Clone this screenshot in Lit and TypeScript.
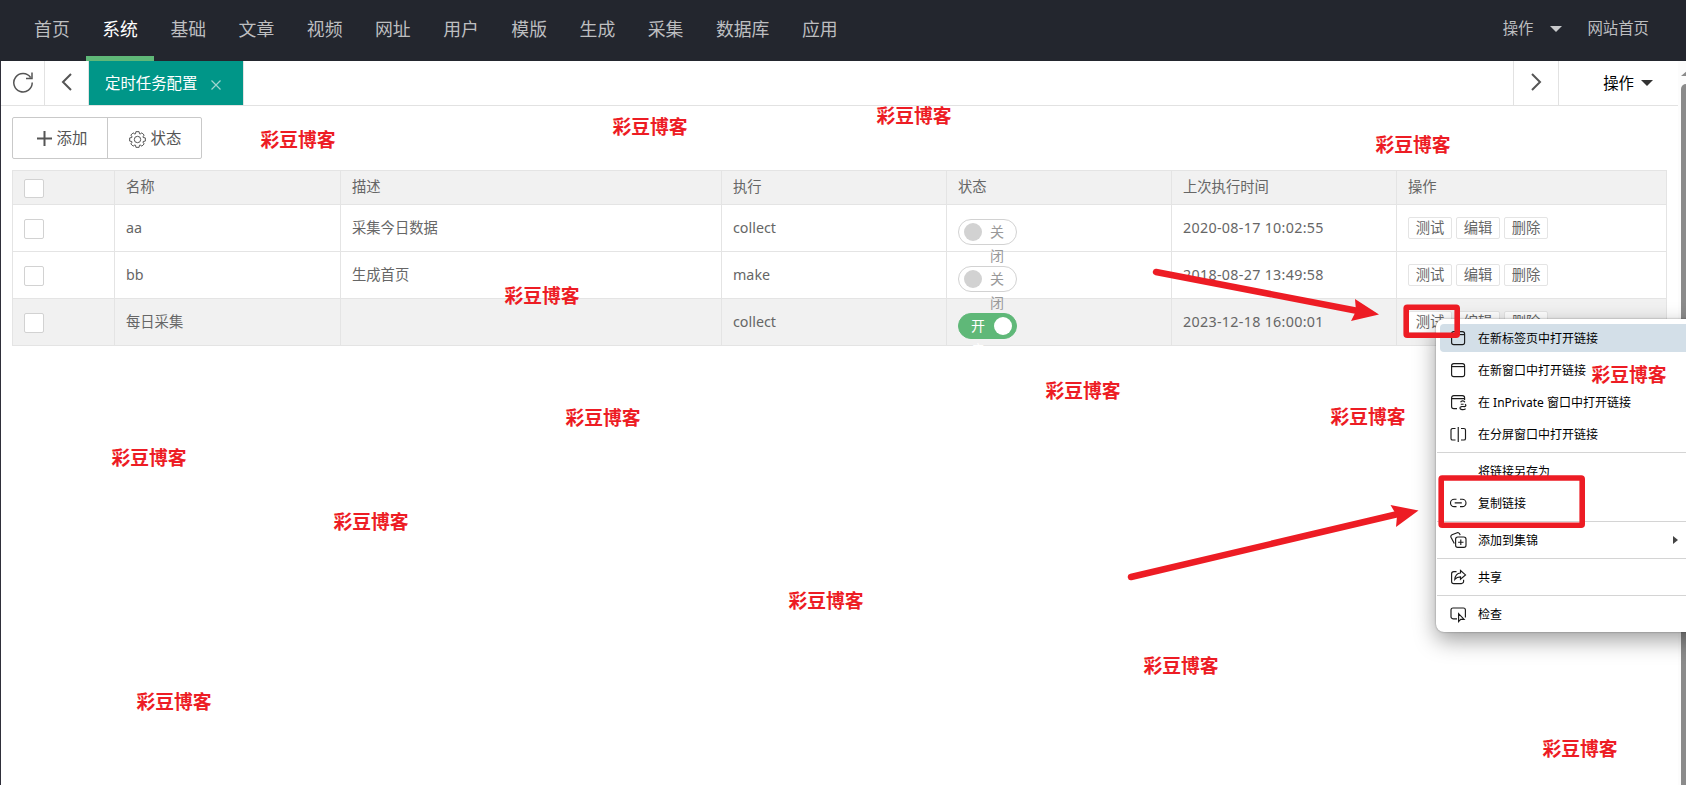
import { LitElement, html, css, svg } from "lit";
import { customElement } from "lit/decorators.js";
import { classMap } from "lit/directives/class-map.js";

const NAV = ["首页", "系统", "基础", "文章", "视频", "网址", "用户", "模版", "生成", "采集", "数据库", "应用"];

const ROWS = [
  { name: "aa", desc: "采集今日数据", run: "collect", on: false, time: "2020-08-17 10:02:55" },
  { name: "bb", desc: "生成首页", run: "make", on: false, time: "2018-08-27 13:49:58" },
  { name: "每日采集", desc: "", run: "collect", on: true, time: "2023-12-18 16:00:01" },
];

const MARKS = [
  [260.5, 140.4], [612.5, 127.4], [876.5, 116.4], [1375.5, 145.4], [504.5, 296.4], [1591.5, 375.4], [1045.500, 391.4], [565.5, 418.4],
  [1330.500, 417.4], [111.500, 458.4], [333.500, 522.4], [788.500, 601.4], [1143.500, 666.4], [136.500, 702.4], [1542.500, 749.4],
];

const ICONS = {
  tab: svg`<rect x="1.6" y="1.6" width="13" height="13" rx="2.2"/><path d="M1.6 4.6h13"/>`,
  inprivate: svg`<path d="M14.6 6V3.8a2.2 2.2 0 0 0-2.2-2.2H3.8A2.2 2.2 0 0 0 1.6 3.8v8.6a2.2 2.2 0 0 0 2.2 2.2H7M1.6 4.6h13M10.6 8.2c.7-1.8 3.6-1.7 4.2.1M10.8 10.2h2.8M14.9 10.4c1.5.4 1.3 2.3-.5 2.2-1.6-.2-4.5-.3-4.5 1.5 0 1.6 3.5 2.2 5.7.6"/>`,
  split: svg`<path d="M5.500 2.500H2.600A1.600 1.600 0 0 0 1 4.100v8.300A1.600 1.600 0 0 0 2.600 14h2.900M11 2.500h2.900a1.600 1.600 0 0 1 1.600 1.600v8.300a1.600 1.600 0 0 1-1.600 1.600H11M8.250 1v15"/>`,
  link: svg`<path d="M6.500 4.200H4.200a3.700 3.700 0 0 0 0 7.400h2.300M10 4.200h2.300a3.700 3.700 0 0 1 0 7.400H10M4.700 7.900h7.100"/>`,
  collect: svg`<path d="M4.300 11.400 1 5.200a2 2 0 0 1 1-2.500L7.200.8a2 2 0 0 1 2.600 1.300l.3 1.100"/><rect x="5.600" y="5" width="10.400" height="10.400" rx="2.200"/><path d="M10.800 7.500v5.400M8.100 10.200h5.400"/>`,
  share: svg`<path d="M6.500 2.600H3.800A2.200 2.200 0 0 0 1.600 4.800v7.600a2.200 2.200 0 0 0 2.200 2.200h7.600a2.200 2.200 0 0 0 2.200-2.200v-1.600M10.500 1.500l5 4.400-5 4.400V7.800c-2.600 0-4.200.7-5.700 2.600.3-3.400 2-6.100 5.700-6.400z"/>`,
  inspect: svg`<path d="M7 12.800H3A2 2 0 0 1 1 10.800V4a2 2 0 0 1 2-2h10.400a2 2 0 0 1 2 2v7.400M8.600 7.600v8l2.100-2.200h3.400z"/>`,
};

type Entry = { label: string; icon?: keyof typeof ICONS; hot?: boolean; more?: boolean };
const MENU: Entry[][] = [
  [
    { label: "在新标签页中打开链接", icon: "tab", hot: true },
    { label: "在新窗口中打开链接", icon: "tab" },
    { label: "在 InPrivate 窗口中打开链接", icon: "inprivate" },
    { label: "在分屏窗口中打开链接", icon: "split" },
  ],
  [{ label: "将链接另存为" }, { label: "复制链接", icon: "link" }],
  [{ label: "添加到集锦", icon: "collect", more: true }],
  [{ label: "共享", icon: "share" }],
  [{ label: "检查", icon: "inspect" }],
];

@customElement("context-menu")
class ContextMenu extends LitElement {
  static styles = css`
    :host { display: block; box-sizing: border-box; width: 270px; background: #fff; border-radius: 8px; padding-top: 1px;
      box-shadow: 0 0 2px rgba(0,0,0,.4), 0 8px 22px rgba(0,0,0,.38); font-size: 12px; color: #000; }
    .group { display: flex; flex-direction: column; gap: 4px; padding: 4px 0; border-top: 1px solid #d4d4d4; margin-left: 1px; }
    .group:first-child { border-top: 0; }
    .entry { display: flex; align-items: center; height: 28px; margin-left: 3px; padding-left: 10px; border-radius: 4px; }
    .hot { background: #d3dfe8; }
    .icon { width: 17px; height: 17px; margin-right: 11px; flex: none; fill: none; stroke: #1b1b1b; stroke-width: 1.15; }
    .label { flex: none; white-space: pre; padding-top: 1px; }
    .more { margin-left: 135px; width: 0; border-left: 5px solid #444; border-top: 4px solid transparent; border-bottom: 4px solid transparent; }
  `;
  render() {
    return MENU.map((group) => html`<div class="group">${group.map((e) => html`
      <div class=${classMap({ entry: true, hot: !!e.hot })}>
        <svg class="icon" viewBox="0 0 17 17">${e.icon ? ICONS[e.icon] : ""}</svg>
        <span class="label">${e.label}</span>
        ${e.more ? html`<i class="more"></i>` : ""}
      </div>`)}</div>`);
  }
}

@customElement("task-table")
class TaskTable extends LitElement {
  static styles = css`
    :host { display: block; font-size: 14.300px; color: #666; }
    .row { display: grid; grid-template-columns: 102px 226px 381px 225px 225px 225px 270px; height: 47px; box-sizing: border-box;
      border-bottom: 1px solid #e4e4e4; border-left: 1px solid #e4e4e4; width: 1655px; background: #fff; }
    .head { height: 35px; border-top: 1px solid #e4e4e4; background: #f1f1f1; }
    .hover { background: #f1f1f1; }
    .cell { box-sizing: border-box; border-right: 1px solid #e4e4e4; padding: 0 11px; display: flex; align-items: center; min-width: 0; white-space: nowrap; padding-bottom: 1px; }
    .text { padding: 1px 11px 0; }
    .head .text { padding-bottom: 1px; }
    .time { letter-spacing: .3px; }
    .box { box-sizing: border-box; width: 20px; height: 20px; border: 1px solid #d2d2d2; border-radius: 2px; background: #fff; margin-top: 3px; }
    .head .box { margin-top: 2px; height: 19px; }
    .switch { box-sizing: border-box; width: 59px; height: 26px; border: 1px solid #d2d2d2; border-radius: 13px; background: #fff; color: #999; font-size: 14px;
      display: flex; align-items: flex-start; padding: 3px 5px; margin-top: 9px; }
    .knob { width: 18px; height: 18px; border-radius: 9px; background: #d2d2d2; flex: none; }
    .word { width: 15px; margin-left: 8px; line-height: 24px; margin-top: -3px; white-space: normal; word-break: break-all; }
    .on { flex-direction: row-reverse; background: #5fb878; border-color: #5fb878; color: #fff; padding-right: 4px; }
    .on .knob { background: #fff; }
    .on .word { margin: -3px 8px 0 0; }
    .ops { gap: 4px; }
    .op { box-sizing: border-box; width: 44px; height: 22px; line-height: 20px; text-align: center; border: 1px solid #e4e4e4; border-radius: 2px; background: #fff; }
  `;
  render() {
    return html`
      <div class="row head">
        <div class="cell"><i class="box"></i></div>
        ${["名称", "描述", "执行", "状态", "上次执行时间", "操作"].map((t) => html`<div class="cell text">${t}</div>`)}
      </div>
      ${ROWS.map((r) => html`
        <div class=${classMap({ row: true, hover: r.on })}>
          <div class="cell"><i class="box"></i></div>
          <div class="cell text">${r.name}</div>
          <div class="cell text">${r.desc}</div>
          <div class="cell text">${r.run}</div>
          <div class="cell"><div class=${classMap({ switch: true, on: r.on })}><i class="knob"></i><span class="word">${r.on ? "开启" : "关闭"}</span></div></div>
          <div class="cell text time">${r.time}</div>
          <div class="cell ops">${["测试", "编辑", "删除"].map((t) => html`<span class="op">${t}</span>`)}</div>
        </div>`)}`;
  }
}

const gear = () => {
  const pts: string[] = [];
  for (let i = 0; i < 8; i++) {
    const a = (i * Math.PI) / 4;
    for (const [d, r] of [[-0.34, 6], [-0.2, 8], [0.2, 8], [0.34, 6]]) {
      pts.push(`${(8.5 + r * Math.sin(a + d)).toFixed(2)},${(8.5 - r * Math.cos(a + d)).toFixed(2)}`);
    }
  }
  return pts.join(" ");
};

@customElement("app-root")
class AppRoot extends LitElement {
  static styles = css`
    :host { display: block; position: relative; width: 1686px; height: 785px; overflow: hidden; background: #fff;
      font-family: "Noto Sans", "Noto Sans CJK SC", sans-serif; line-height: 1.3; }
    .top { display: flex; justify-content: space-between; height: 61px; background: #23262e; color: #bdbec0; }
    .nav { display: flex; padding-left: 17.800px; font-size: 17.850px; }
    .item { box-sizing: border-box; height: 61px; line-height: 58px; padding: 0 16.250px; }
    .active { color: #fff; border-bottom: 5px solid #5fb878; }
    .user { display: flex; align-items: center; font-size: 15.400px; padding: 0 37px 3px 0; }
    .caret { width: 0; border: 6px solid transparent; border-bottom-width: 0; border-top-color: #c8c9cb; margin: 0 25.500px 0 16.500px; }
    .body { display: flex; border-left: 1px solid #2f2f3a; height: 724px; box-sizing: border-box; }
    .main { width: 1677px; }
    .tabs { display: flex; height: 44px; border-bottom: 1px solid #e2e2e2; }
    .tool { display: flex; align-items: center; justify-content: center; width: 43px; border-right: 1px solid #e2e2e2; padding-bottom: 2px; box-sizing: content-box; height: 42px; }
    .stroke { fill: none; stroke: #555; stroke-width: 1.500; }
    .tab { display: flex; align-items: center; box-sizing: border-box; width: 154px; padding: 2px 0 0 16px; background: #009688; color: #fff; font-size: 15.400px; white-space: nowrap; }
    .tab svg { margin: 1px 0 0 14px; stroke: #9fd5cf; stroke-width: 1.200; }
    .space { flex: 1; border-left: 1px solid #e2e2e2; }
    .next { border-left: 1px solid #e2e2e2; width: 44px; }
    .act { width: 119px; display: flex; align-items: center; justify-content: flex-end; box-sizing: border-box; padding: 2px 25px 0 0; font-size: 15.400px; color: #000; }
    .act i { border: 6px solid transparent; border-bottom-width: 0; border-top-color: #333; margin: 0 0 3px 7px; }
    .buttons { display: grid; grid-template-columns: 94px 94px; width: 190px; box-sizing: border-box; height: 42px; margin: 11px 0 11px 11px; border: 1px solid #c9c9c9; border-radius: 2px; color: #555; font-size: 15.400px; }
    .btn { display: flex; align-items: center; justify-content: center; gap: 5px; padding: 2px 0 0 1px; }
    .btn:first-child { padding-left: 4px; }
    .btn:first-child svg { margin-bottom: 2px; }
    .btn + .btn { border-left: 1px solid #c9c9c9; }
    .list { margin-left: 11px; }
    .scroll { flex: 1; background: #fcfcfc; display: flex; flex-direction: column; overflow: hidden; padding-left: 3px; }
    .up { width: 0; border: 6px solid transparent; border-top-width: 0; border-bottom: 5px solid #8b8b8b; margin: 10px 0 8px; }
    .thumb { flex: 1; width: 10px; background: #8b8b8b; border-radius: 5px 5px 0 0; }
    .menu { position: absolute; left: 1436px; top: 319px; }
    .over { position: absolute; inset: 0; }
    .mark { position: absolute; font-size: 18.800px; font-weight: 700; color: #ed1c24; line-height: 24px; white-space: nowrap; transform: translateY(-50%); }
  `;
  render() {
    return html`
      <header class="top">
        <nav class="nav">${NAV.map((n, i) => html`<span class=${classMap({ item: true, active: i === 1 })}>${n}</span>`)}</nav>
        <div class="user"><span>操作</span><i class="caret"></i><span>网站首页</span></div>
      </header>
      <div class="body">
        <main class="main">
          <div class="tabs">
            <span class="tool"><svg class="stroke" width="22" height="22" viewBox="0 0 22 22"><path d="M18.600 6.500A9.200 9.200 0 1 0 20.200 11.500M20 1.500v6h-6"/></svg></span>
            <span class="tool"><svg class="stroke" width="12" height="20" viewBox="0 0 12 20"><path d="M10 2 2 10l8 8" stroke-width="2"/></svg></span>
            <span class="tab">定时任务配置<svg width="10" height="10"><path d="M.5.5l9 9M9.500.5l-9 9"/></svg></span>
            <span class="space"></span>
            <span class="tool next"><svg class="stroke" width="12" height="20" viewBox="0 0 12 20"><path d="M2 2l8 8-8 8" stroke-width="2"/></svg></span>
            <span class="act">操作<i></i></span>
          </div>
          <div class="buttons">
            <span class="btn"><svg width="15" height="15" class="stroke"><path d="M7.500 0v15M0 7.500h15" stroke-width="2"/></svg>添加</span>
            <span class="btn"><svg width="17" height="17" class="stroke"><polygon points=${gear()} stroke-width="1"/><circle cx="8.500" cy="8.500" r="3.200" stroke-width="1"/></svg>状态</span>
          </div>
          <task-table class="list"></task-table>
        </main>
        <div class="scroll"><i class="up"></i><i class="thumb"></i></div>
      </div>
      <context-menu class="menu"></context-menu>
      <svg class="over" width="1686" height="785" fill="#ed1c24" stroke="#ed1c24">
        <path d="M1156 272 1358 311M1131 577 1398 514" stroke-width="6.500" stroke-linecap="round"/>
        <path d="M1355 299l24 15.500-28 6.500 5-10zM1390.500 505l28 5.500-22.500 16.500 1-11z" stroke="none"/>
        <rect x="1406.200" y="307.200" width="51" height="28" rx="1" fill="none" stroke-width="5.600"/>
        <rect x="1441.200" y="478" width="141" height="47.200" rx="1" fill="none" stroke-width="5.600"/>
      </svg>
      ${MARKS.map(([x, y]) => html`<span class="mark" style="left:${x}px;top:${y}px">彩豆博客</span>`)}
    `;
  }
}
